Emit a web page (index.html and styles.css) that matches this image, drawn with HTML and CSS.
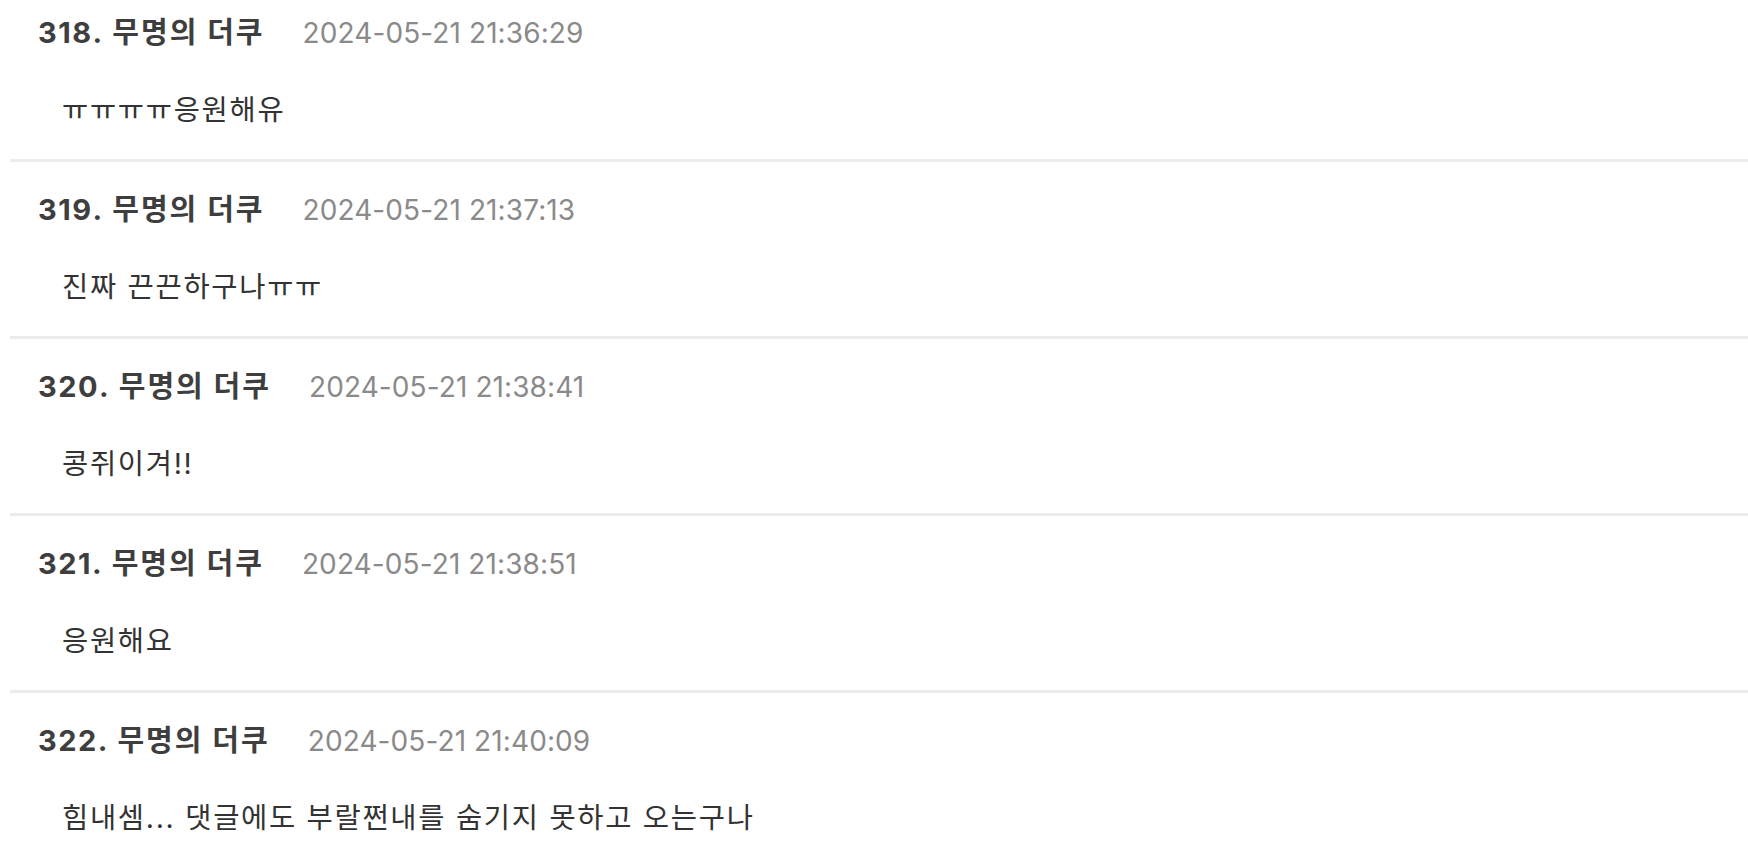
FILE: index.html
```html
<!DOCTYPE html>
<html lang="ko">
<head>
<meta charset="utf-8">
<title>댓글</title>
<link rel="stylesheet" href="styles.css">
</head>
<body>
<ul class="comments">
  <li class="comment">
    <div class="meta"><span class="author"><span class="num">318</span>. 무명의 더쿠</span><span class="date">2024-05-21 21:36:29</span></div>
    <p class="text">ㅠㅠㅠㅠ응원해유</p>
  </li>
  <li class="comment">
    <div class="meta"><span class="author"><span class="num">319</span>. 무명의 더쿠</span><span class="date">2024-05-21 21:37:13</span></div>
    <p class="text">진짜 끈끈하구나ㅠㅠ</p>
  </li>
  <li class="comment">
    <div class="meta"><span class="author"><span class="num">320</span>. 무명의 더쿠</span><span class="date">2024-05-21 21:38:41</span></div>
    <p class="text">콩쥐이겨!!</p>
  </li>
  <li class="comment">
    <div class="meta"><span class="author"><span class="num">321</span>. 무명의 더쿠</span><span class="date">2024-05-21 21:38:51</span></div>
    <p class="text">응원해요</p>
  </li>
  <li class="comment">
    <div class="meta"><span class="author"><span class="num">322</span>. 무명의 더쿠</span><span class="date">2024-05-21 21:40:09</span></div>
    <p class="text">힘내셈... 댓글에도 부랄쩐내를 숨기지 못하고 오는구나</p>
  </li>
</ul>
</body>
</html>
```

FILE: styles.css
```css
html, body {
  margin: 0;
  padding: 0;
  background: #ffffff;
}
body {
  font-family: Inter, "Noto Sans CJK KR", sans-serif;
  overflow: hidden;
}
.comments {
  list-style: none;
  margin: -15px 0 0 10px;
  padding: 0;
}
.comment {
  padding: 28px 0 29px 28px;
  border-bottom: 3px solid #ececec;
}
.meta {
  display: flex;
  align-items: center;
  gap: 38px;
  height: 40px;
  line-height: 40px;
}
.author {
  font-size: 29px;
  font-weight: 700;
  color: #3e3e3e;
  letter-spacing: 2px;
}
.num {
  letter-spacing: 1.5px;
}
.date {
  font-size: 28px;
  color: #8a8a8a;
  letter-spacing: 0.1px;
}
.text {
  margin: 37px 0 0 24px;
  height: 40px;
  line-height: 40px;
  font-size: 28.5px;
  color: #333333;
  letter-spacing: 1.7px;
}
```
